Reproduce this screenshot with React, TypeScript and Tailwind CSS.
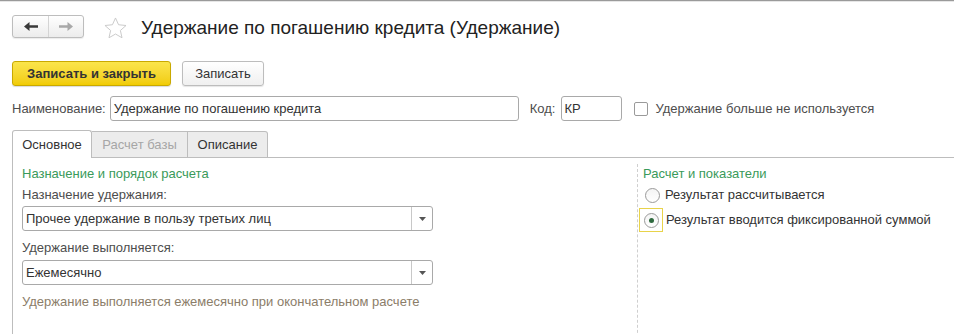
import React from "react";

const font = { fontFamily: '"Liberation Sans", Arial, sans-serif' };

function Dropdown({ value }: { value: string }) {
  return (
    <div className="flex h-[25px] w-[411px] items-stretch rounded-[3px] border border-[#a9a9a9] bg-white">
      <div className="flex flex-1 items-center pl-[3px] text-[13px] text-[#333]">{value}</div>
      <div className="flex w-[21px] items-center justify-center border-l border-[#c8c8c8]">
        <svg width="7" height="4" viewBox="0 0 7 4"><path d="M0 0h7L3.5 4z" fill="#555" /></svg>
      </div>
    </div>
  );
}

function Radio({ checked }: { checked?: boolean }) {
  return (
    <div className="flex h-[15px] w-[15px] items-center justify-center rounded-full border border-[#9a9a9a] bg-gradient-to-b from-[#f4f4f4] to-white">
      {checked && <div className="h-[5px] w-[5px] rounded-full bg-[#2f6a3f]" />}
    </div>
  );
}

export default function App() {
  return (
    <div className="relative h-[334px] w-[954px] overflow-hidden bg-white text-[#333] leading-[16px]" style={font}>
      <div className="h-[2px] border-t border-[#9a9a9a] bg-[#e6e6e6]" />
      {/* header */}
      <div className="flex h-[38px] items-start pl-[12px]">
        <div className="mt-[13px] flex h-[23px] w-[72px] rounded-[3px] border border-[#bdbdbd] bg-gradient-to-b from-white to-[#ececec] shadow-[0_1px_1px_rgba(0,0,0,0.08)]">
          <div className="flex w-[36px] items-center justify-center border-r border-[#d4d4d4]">
            <svg width="14" height="9" viewBox="0 0 14 9"><path d="M0 4.5L5.5 0v3.3H14v2.4H5.5V9z" fill="#3a3a3a" /></svg>
          </div>
          <div className="flex flex-1 items-center justify-center">
            <svg width="14" height="9" viewBox="0 0 14 9"><path d="M14 4.5L8.5 0v3.3H0v2.4h8.5V9z" fill="#a8a8a8" /></svg>
          </div>
        </div>
        <svg className="ml-[20px] mt-[15px]" width="23" height="22" viewBox="0 0 24 23">
          <path d="M12 1l3.2 7.1 7.8.8-5.9 5.2 1.7 7.6L12 17.8l-6.8 3.9 1.7-7.6L1 8.9l7.8-.8z" fill="none" stroke="#c8c8c8" strokeWidth="1" />
        </svg>
        <div className="ml-[14px] mt-[15px] text-[19px] leading-[22px] text-[#222]">Удержание по погашению кредита (Удержание)</div>
      </div>
      {/* buttons */}
      <div className="mt-[21px] flex gap-[11px] pl-[12px]">
        <div className="flex h-[25px] w-[159px] items-center justify-center rounded-[3px] border border-[#c9a900] bg-gradient-to-b from-[#fbe54a] to-[#f1cc00] text-[13px] font-bold text-[#333] shadow-[0_1px_1px_rgba(0,0,0,0.15)]">
          Записать и закрыть
        </div>
        <div className="flex h-[25px] w-[82px] items-center justify-center rounded-[3px] border border-[#bdbdbd] bg-gradient-to-b from-white to-[#f0f0f0] text-[13px] text-[#333] shadow-[0_1px_1px_rgba(0,0,0,0.1)]">
          Записать
        </div>
      </div>
      {/* fields */}
      <div className="mt-[10px] flex items-center pl-[12px] text-[13px]">
        <span className="text-[#4d4d4d]">Наименование:</span>
        <div className="ml-[4px] flex h-[25px] w-[409px] items-center rounded-[3px] border border-[#a9a9a9] pl-[3px] text-[#333]">
          Удержание по погашению кредита
        </div>
        <span className="ml-[11px] text-[#4d4d4d]">Код:</span>
        <div className="ml-[6px] flex h-[25px] w-[61px] items-center rounded-[3px] border border-[#a9a9a9] pl-[2px] text-[#333]">
          КР
        </div>
        <div className="ml-[12px] h-[14px] w-[14px] rounded-[2px] border border-[#9a9a9a] bg-white" />
        <span className="ml-[7px] text-[#4d4d4d]">Удержание больше не используется</span>
      </div>
      {/* tabs */}
      <div className="mt-[9px] flex pl-[12px] text-[13px]">
        <div className="flex h-[28px] w-[80px] items-center justify-center rounded-t-[3px] border border-b-0 border-[#bdbdbd] bg-white text-[#333]">
          Основное
        </div>
        <div className="mt-[1px] flex h-[27px] w-[96px] items-center justify-center border-t border-r border-b border-[#bdbdbd] bg-[#ececec] text-[#a6a6a6]">
          Расчет базы
        </div>
        <div className="mt-[1px] flex h-[27px] w-[80px] items-center justify-center rounded-tr-[3px] border-t border-r border-b border-[#bdbdbd] bg-[#ececec] text-[#333]">
          Описание
        </div>
        <div className="flex-1 border-b border-[#bdbdbd]" />
      </div>
      {/* panel */}
      <div className="ml-[12px] flex h-[200px] border-l border-[#bdbdbd] text-[13px]">
        <div className="w-[624px] pl-[9px] pt-[8px]">
          <div className="text-[#3a9a5a]">Назначение и порядок расчета</div>
          <div className="mt-[5px] text-[#4d4d4d]">Назначение удержания:</div>
          <div className="mt-[3px]"><Dropdown value="Прочее удержание в пользу третьих лиц" /></div>
          <div className="mt-[9px] text-[#4d4d4d]">Удержание выполняется:</div>
          <div className="mt-[4px]"><Dropdown value="Ежемесячно" /></div>
          <div className="mt-[9px] text-[#8b7d69]">Удержание выполняется ежемесячно при окончательном расчете</div>
        </div>
        <div className="mt-[6px] flex-1 border-l border-dashed border-[#cfcfcf] pl-[5px] pt-[2px]">
          <div className="text-[#3a9a5a]">Расчет и показатели</div>
          <div className="mt-[5px] flex items-center pl-[2px]">
            <Radio />
            <span className="ml-[5px] text-[#333]">Результат рассчитывается</span>
          </div>
          <div className="mt-[5px] flex items-center">
            <div className="-ml-[4px] flex h-[24px] w-[24px] items-center justify-center border border-[#e8d34a]">
              <Radio checked />
            </div>
            <span className="ml-[3px] text-[#333]">Результат вводится фиксированной суммой</span>
          </div>
        </div>
      </div>
    </div>
  );
}
